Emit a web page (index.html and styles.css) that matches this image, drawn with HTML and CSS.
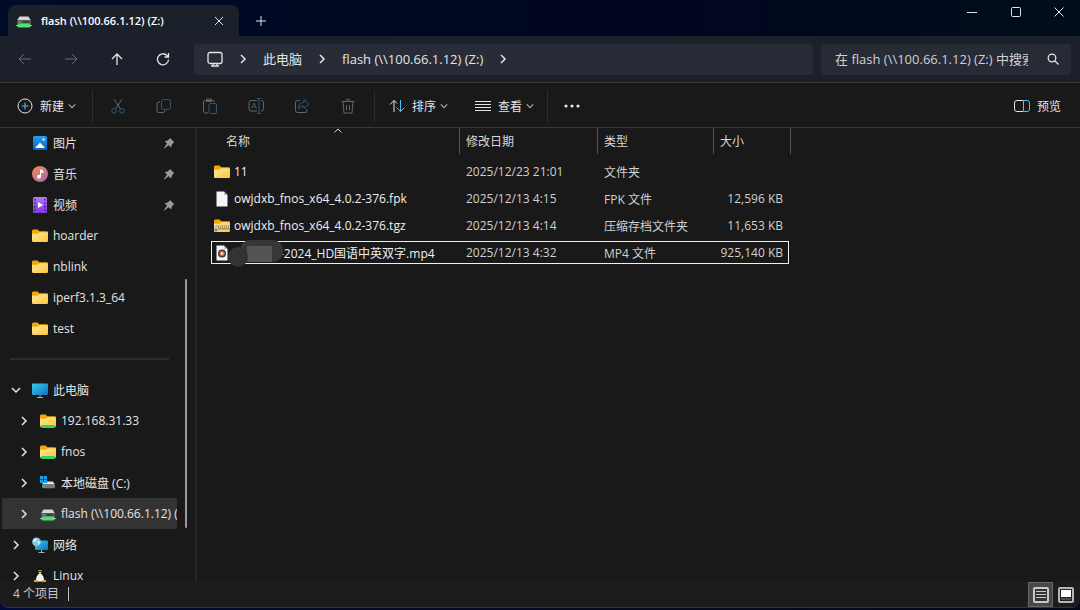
FILE: index.html
```html
<!DOCTYPE html>
<html lang="zh-CN">
  <head>
    <meta charset="UTF-8" />
    <meta name="viewport" content="width=device-width, initial-scale=1.0" />
    <title>flash (\\100.66.1.12) (Z:)</title>
    <link rel="stylesheet" href="styles.css">
  </head>
  <body>
    <!-- Shared icons -->
    <svg class="sprite" aria-hidden="true">
      <defs>
        <linearGradient id="gFolder" x1="0" y1="0" x2="1" y2="1">
          <stop offset="0" stop-color="#ffe9a0" />
          <stop offset="1" stop-color="#fcc637" />
        </linearGradient>
        <linearGradient id="gScreen" x1="0" y1="0" x2="1" y2="1">
          <stop offset="0" stop-color="#35d0e4" />
          <stop offset="1" stop-color="#0f6fc5" />
        </linearGradient>
        <linearGradient id="gPhoto" x1="0" y1="0" x2="0" y2="1">
          <stop offset="0" stop-color="#23a0ee" />
          <stop offset="1" stop-color="#0c63bd" />
        </linearGradient>
        <linearGradient id="gMusic" x1="0" y1="0" x2="1" y2="1">
          <stop offset="0" stop-color="#f38e50" />
          <stop offset="1" stop-color="#a866a8" />
        </linearGradient>
        <linearGradient id="gVideo" x1="0" y1="0" x2="0" y2="1">
          <stop offset="0" stop-color="#b279f4" />
          <stop offset="1" stop-color="#823be0" />
        </linearGradient>
      </defs>
      <symbol id="folder" viewBox="0 0 16 16">
        <path d="M0 3Q0 1.500 1.200 1.500H5.600L7.200 3.200H14.800Q16 3.200 16 4.400V9H0Z" fill="#f5a900" />
        <path d="M0 5.800H5.400L7.400 4.200H14.900Q16 4.200 16 5.400V12.800Q16 14 14.800 14H1.200Q0 14 0 12.800Z" fill="url(#gFolder)" />
      </symbol>
      <symbol id="netfolder" viewBox="0 0 16 16">
        <use href="#folder" width="16" height="16" />
        <rect x="1" y="12" width="14" height="3" rx="1" fill="#35d55c" />
      </symbol>
      <symbol id="netdrive" viewBox="0 0 16 16">
        <path d="M3.600 3.400H12.400L15 7.400H1Z" fill="#d5d7d7" />
        <rect x="1" y="7" width="14" height="4" rx="1" fill="#555b59" />
        <rect x="3" y="8.400" width="2" height="1" fill="#4be36f" />
        <rect x="7" y="8.400" width="6" height="1" fill="#262a28" />
        <rect x="1.600" y="10.600" width="12.800" height="3.800" rx="1.200" fill="#4be36f" />
        <path d="M0 12.500H3M13 12.500H16" stroke="#aeb4b1" />
      </symbol>
      <symbol id="cdrive" viewBox="0 0 16 16">
        <path d="M4 6.400H12.800L15 9.600H2Z" fill="#e2e3e3" />
        <rect x="2" y="9.200" width="13" height="4" rx="1" fill="#787b7c" />
        <rect x="3.600" y="10.800" width="1.600" height="1" fill="#4be36f" />
        <path d="M0 1H3.200V4.200H0ZM3.800 1H7V4.200H3.800ZM0 4.800H3.200V8H0ZM3.800 4.800H7V8H3.800Z" fill="#1aa0ea" />
      </symbol>
      <symbol id="monitor" viewBox="0 0 16 16">
        <rect x="0" y="1.500" width="16" height="11.500" rx="1" fill="url(#gScreen)" />
        <path d="M8 13V15M5 15.500H11" stroke="#a6afb4" />
      </symbol>
      <symbol id="network" viewBox="0 0 16 16">
        <rect x="3" y="3.500" width="13" height="9.500" rx="1" fill="url(#gScreen)" />
        <path d="M9.500 13V15M6.500 15.500H12.500" stroke="#a6afb4" />
        <circle cx="4.500" cy="4.800" r="4.400" fill="#83c4e4" />
        <path d="M1 3Q3 .6 5 2L4 4.400L2 5ZM5.500 4L8.200 5L6.400 8.200Z" fill="#d8f0f6" />
      </symbol>
      <symbol id="penguin" viewBox="0 0 16 16">
        <path d="M8 1Q11 1 11 5Q14 9 13.600 14H2.400Q2 9 5 5Q5 1 8 1Z" fill="#101010" />
        <path d="M8 4.500Q12.500 8 12 13.500H4Q3.500 8 8 4.500Z" fill="#f2f2f2" />
        <path d="M6.200 4H9.800L8 6.200Z" fill="#f2b01e" />
        <circle cx="7" cy="2.800" r=".7" fill="#fff" />
        <circle cx="9" cy="2.800" r=".7" fill="#fff" />
        <path d="M2 12.500Q4 10 6.800 14Q4 16 1.600 15ZM14 12.500Q12 10 9.200 14Q12 16 14.400 15Z" fill="#e0a21b" />
      </symbol>
      <symbol id="photo" viewBox="0 0 16 16">
        <rect x="1" y="1" width="14" height="14" rx="1.500" fill="url(#gPhoto)" />
        <path d="M3 13L8 7.500L13 13Z" fill="#fff" />
        <circle cx="11.500" cy="4.500" r="1.300" fill="#cde9fb" />
      </symbol>
      <symbol id="music" viewBox="0 0 16 16">
        <circle cx="8" cy="8" r="8" fill="url(#gMusic)" />
        <path d="M8.500 10.500V3.800L11 5V6.600L8.500 6" fill="#fff" stroke="#fff" />
        <circle cx="7" cy="10.800" r="2" fill="#fff" />
      </symbol>
      <symbol id="video" viewBox="0 0 16 16">
        <rect x="1" y="0" width="14" height="16" rx="1.500" fill="url(#gVideo)" />
        <path d="M3 2V14M13 2V14" stroke="#42207c" stroke-width="1.600" stroke-dasharray="1.600 1.800" />
        <path d="M6 5V11L11 8Z" fill="#fff" />
      </symbol>
      <symbol id="pin" viewBox="0 0 12 12">
        <path d="M7 1L11.300 5.300L10 6L8.600 8.200L8.200 10.600L5.600 8.200L1.400 11.400L1 11L4 6.600L1.600 4.200L4 3.700L6.200 2.300Z" fill="#929ba1" />
      </symbol>
      <symbol id="right" viewBox="0 0 10 10">
        <path d="M3 1L7 5L3 9" fill="none" stroke="currentColor" stroke-width="1.500" />
      </symbol>
      <symbol id="down" viewBox="0 0 10 10">
        <path d="M1 3L5 7L9 3" fill="none" stroke="currentColor" stroke-width="1.500" />
      </symbol>
      <symbol id="file" viewBox="0 0 16 16">
        <path d="M2.500 .5H10L13.500 4V15.500H2.500Z" fill="#f5f5f5" />
        <path d="M10 .5V4H13.500Z" fill="#b9b9b9" />
      </symbol>
      <symbol id="zip" viewBox="0 0 16 16">
        <use href="#folder" width="16" height="16" />
        <path d="M1 9.500H16" stroke="#a5946a" stroke-width="4" />
        <path d="M1 9H16" stroke="#d9d3c0" stroke-width="2" stroke-dasharray="1 1" />
        <rect x="0" y="8" width="4" height="6" rx="1" fill="#c4c2b8" />
        <rect x="1" y="11" width="2" height="2" fill="#77756c" />
      </symbol>
      <symbol id="media" viewBox="0 0 16 16">
        <use href="#file" width="16" height="16" />
        <circle cx="8" cy="8.500" r="4" fill="#3d3a4c" />
        <circle cx="8" cy="8.500" r="2.600" fill="#d9794f" />
        <path d="M7 7V10L9.600 8.500Z" fill="#fff" />
      </symbol>
    </svg>

    <div class="window">
      <header class="titlebar">
        <div class="tab">
          <svg class="icon"><use href="#netdrive" /></svg>
          <span class="tab-title">flash (\\100.66.1.12) (Z:)</span>
          <button class="tab-close" aria-label="关闭标签页">
            <svg width="10" height="10" class="line"><path d="M1 1L9 9M9 1L1 9" /></svg>
          </button>
        </div>
        <button class="tab-add" aria-label="新标签页">
          <svg width="10" height="10" class="line"><path d="M5 0V10M0 5H10" /></svg>
        </button>
        <div class="caption">
          <button aria-label="最小化"><svg width="10" height="10" class="line"><path d="M0 5.500H10" /></svg></button>
          <button aria-label="最大化"><svg width="10" height="10" class="line"><rect x=".5" y=".5" width="9" height="9" rx="1" /></svg></button>
          <button aria-label="关闭"><svg width="10" height="10" class="line"><path d="M.5 .5L9.500 9.500M9.500 .5L.5 9.500" /></svg></button>
        </div>
      </header>

      <div class="navbar">
        <div class="nav-buttons">
          <button class="dim" aria-label="后退"><svg width="14" height="14" class="line"><path d="M13 7H1M6 2L1 7L6 12" /></svg></button>
          <button class="dim" aria-label="前进"><svg width="14" height="14" class="line"><path d="M1 7H13M8 2L13 7L8 12" /></svg></button>
          <button aria-label="向上"><svg width="14" height="14" class="line bold"><path d="M7 13V2M2 7L7 2L12 7" /></svg></button>
          <button aria-label="刷新"><svg width="14" height="14" class="line bold"><path d="M12.500 7.500A5.500 5.500 0 1 1 11 3.500L12.500 5M12.500 1V5H8.500" /></svg></button>
        </div>
        <nav class="address" aria-label="地址">
          <svg width="16" height="16" class="line bold pc"><rect x="1" y="1.500" width="14" height="11" rx="2" /><path d="M6 12.500V15M10 12.500V15M4 15H12" /></svg>
          <svg class="chev"><use href="#right" /></svg>
          <a href="#">此电脑</a>
          <svg class="chev"><use href="#right" /></svg>
          <a href="#">flash (\\100.66.1.12) (Z:)</a>
          <svg class="chev"><use href="#right" /></svg>
        </nav>
        <div class="search">
          <input type="text" aria-label="搜索" placeholder="在 flash (\\100.66.1.12) (Z:) 中搜索" />
          <button aria-label="开始搜索"><svg width="12" height="12" class="line bold"><circle cx="5" cy="5" r="3.800" /><path d="M8 8L11.500 11.500" /></svg></button>
        </div>
      </div>

      <div class="toolbar">
        <button class="cmd cmd-new">
          <svg width="16" height="16" class="line"><circle cx="8" cy="8" r="7" /><path class="blue" d="M8 4.500V11.500M4.500 8H11.500" /></svg>
          新建
          <svg class="drop"><use href="#down" /></svg>
        </button>
        <div class="sep"></div>
        <div class="tools">
          <button aria-label="剪切"><svg width="16" height="16" class="line"><path d="M4 1L10.500 11M12 1L5.500 11" /><g class="blue"><circle cx="4" cy="12.800" r="2.300" /><circle cx="12" cy="12.800" r="2.300" /></g></svg></button>
          <button aria-label="复制"><svg width="16" height="16" class="line"><path d="M4 4H3Q1 4 1 6V12.500Q1 14.500 3 14.500H7Q9 14.500 9 12.500" /><rect class="blue" x="5.500" y="1.500" width="9" height="10" rx="2" /></svg></button>
          <button aria-label="粘贴"><svg width="16" height="16" class="line"><path d="M6 15H3.500Q1.500 15 1.500 13V4Q1.500 2.500 3.500 2.500H10.500Q12.500 2.500 12.500 4M4.500 3.500V1H9.500V3.500Z" /><rect class="blue" x="7" y="5.500" width="7.500" height="10" rx="1.500" /></svg></button>
          <button aria-label="重命名"><svg width="16" height="16" class="line"><path d="M9 2.500H3Q1 2.500 1 4.500V11Q1 13 3 13H9M13 2.500Q15.500 2.500 15.500 5V10.500Q15.500 13 13 13" /><path class="blue" d="M3.500 10.500L6 5L8.500 10.500M4.300 9H7.700M11 .5V15.500M9 .5H13M9 15.500H13" /></svg></button>
          <button aria-label="共享"><svg width="16" height="16" class="line"><path d="M6 2.500H3.500Q1.500 2.500 1.500 4.500V12.500Q1.500 14.500 3.500 14.500H11Q13 14.500 13 12.500V11" /><path class="blue" d="M10 1.500L15 6L10 10.500V8Q6.500 7.500 4.500 11Q4.500 4.500 10 4Z" /></svg></button>
          <button aria-label="删除"><svg width="16" height="16" class="line"><path d="M1.500 3.500H14.500M6 3.500Q6 1 8 1Q10 1 10 3.500M3 3.500L4 15H12L13 3.500M6.500 7V12M9.500 7V12" /></svg></button>
        </div>
        <div class="sep"></div>
        <button class="cmd">
          <svg width="16" height="16" class="line"><path d="M5 14V2.500M1 6.500L5 2.500L8 5.500" /><path class="blue" d="M11.500 2V13.500M7.500 9.500L11.500 13.500L15.500 9.500" /></svg>
          排序
          <svg class="drop"><use href="#down" /></svg>
        </button>
        <button class="cmd">
          <svg width="16" height="16" class="line"><path d="M0 3.500H16M0 6.500H16M0 9.500H16M0 12.500H16" /></svg>
          查看
          <svg class="drop"><use href="#down" /></svg>
        </button>
        <div class="sep"></div>
        <button class="more" aria-label="更多"><svg width="16" height="4" fill="#e8e8e8"><circle cx="2" cy="2" r="1.600" /><circle cx="8" cy="2" r="1.600" /><circle cx="14" cy="2" r="1.600" /></svg></button>
        <button class="cmd cmd-preview">
          <svg width="16" height="16" class="line"><path d="M9 2.500H3Q.5 2.500 .5 5V11Q.5 13.500 3 13.500H9" /><path class="blue" d="M9.500 2.500H13Q15.500 2.500 15.500 5V11Q15.500 13.500 13 13.500H9.500Z" /></svg>
          预览
        </button>
      </div>

      <main class="content">
        <aside class="sidebar">
          <nav class="tree" aria-label="导航窗格">
            <a href="#" class="item"><svg class="icon"><use href="#photo" /></svg><span>图片</span><svg class="pin"><use href="#pin" /></svg></a>
            <a href="#" class="item"><svg class="icon"><use href="#music" /></svg><span>音乐</span><svg class="pin"><use href="#pin" /></svg></a>
            <a href="#" class="item"><svg class="icon"><use href="#video" /></svg><span>视频</span><svg class="pin"><use href="#pin" /></svg></a>
            <a href="#" class="item"><svg class="icon"><use href="#folder" /></svg><span>hoarder</span></a>
            <a href="#" class="item"><svg class="icon"><use href="#folder" /></svg><span>nblink</span></a>
            <a href="#" class="item"><svg class="icon"><use href="#folder" /></svg><span>iperf3.1.3_64</span></a>
            <a href="#" class="item"><svg class="icon"><use href="#folder" /></svg><span>test</span></a>
            <hr class="divider" />
            <a href="#" class="item node"><svg class="chev"><use href="#down" /></svg><svg class="icon"><use href="#monitor" /></svg><span>此电脑</span></a>
            <a href="#" class="item node child"><svg class="chev"><use href="#right" /></svg><svg class="icon"><use href="#netfolder" /></svg><span>192.168.31.33</span></a>
            <a href="#" class="item node child"><svg class="chev"><use href="#right" /></svg><svg class="icon"><use href="#netfolder" /></svg><span>fnos</span></a>
            <a href="#" class="item node child"><svg class="chev"><use href="#right" /></svg><svg class="icon"><use href="#cdrive" /></svg><span>本地磁盘 (C:)</span></a>
            <a href="#" class="item node child active"><svg class="chev"><use href="#right" /></svg><svg class="icon"><use href="#netdrive" /></svg><span>flash (\\100.66.1.12) (Z:)</span></a>
            <a href="#" class="item node"><svg class="chev"><use href="#right" /></svg><svg class="icon"><use href="#network" /></svg><span>网络</span></a>
            <a href="#" class="item node"><svg class="chev"><use href="#right" /></svg><svg class="icon"><use href="#penguin" /></svg><span>Linux</span></a>
          </nav>
          <div class="scrollbar"><div class="thumb"></div></div>
        </aside>

        <section class="files">
          <table>
            <thead>
              <tr>
                <th class="col-name">名称<svg class="sort-mark line" width="8" height="5"><path d="M.5 4.500L4 1L7.500 4.500" /></svg></th>
                <th class="col-date">修改日期</th>
                <th class="col-type">类型</th>
                <th class="col-size">大小</th>
              </tr>
            </thead>
            <tbody>
              <tr>
                <td><div class="name"><svg class="icon"><use href="#folder" /></svg>11</div></td>
                <td>2025/12/23 21:01</td>
                <td>文件夹</td>
                <td class="size"></td>
              </tr>
              <tr>
                <td><div class="name"><svg class="icon"><use href="#file" /></svg>owjdxb_fnos_x64_4.0.2-376.fpk</div></td>
                <td>2025/12/13 4:15</td>
                <td>FPK 文件</td>
                <td class="size">12,596 KB</td>
              </tr>
              <tr>
                <td><div class="name"><svg class="icon"><use href="#zip" /></svg>owjdxb_fnos_x64_4.0.2-376.tgz</div></td>
                <td>2025/12/13 4:14</td>
                <td>压缩存档文件夹</td>
                <td class="size">11,653 KB</td>
              </tr>
              <tr class="focused">
                <td>
                  <div class="name masked">
                    <svg class="icon"><use href="#media" /></svg>-2024_HD国语中英双字.mp4
                    <svg class="mask" width="56" height="30"><rect x="12" y="1" width="43" height="22" rx="10" fill="#373737" /><rect x="19" y="7" width="25" height="16" fill="#555453" /><circle cx="10" cy="18" r="10" fill="#333" /></svg>
                  </div>
                </td>
                <td>2025/12/13 4:32</td>
                <td>MP4 文件</td>
                <td class="size">925,140 KB</td>
              </tr>
            </tbody>
          </table>
        </section>
      </main>

      <footer class="statusbar">
        <span class="count">4 个项目</span>
        <div class="view-switch">
          <button class="on" aria-label="详细信息"><svg width="16" height="16"><rect x="1" y="1" width="14" height="14" rx="1" fill="#333" stroke="#c9c9c9" stroke-width="2" /><path d="M3 4.500H13M3 7.500H13M3 10.500H13" stroke="#c9c9c9" stroke-width="1" /></svg></button>
          <button aria-label="大缩略图"><svg width="16" height="16"><rect x="1" y="1" width="14" height="14" rx="1" fill="#222" stroke="#b5b5b5" stroke-width="2" /><rect x="3" y="3" width="10" height="7" fill="#fff" /><path d="M3 12H13" stroke="#777" /></svg></button>
        </div>
      </footer>
    </div>
  </body>
</html>
```

FILE: styles.css
```css
* {
  margin: 0;
  padding: 0;
  box-sizing: border-box;
}

body {
  height: 100vh;
  padding-bottom: 2px;
  background: linear-gradient(90deg, #020a3c, #030a22 30%, #05091c);
  font-family: "Open Sans", "Noto Sans CJK SC", sans-serif;
  font-size: 12px;
  color: #e4e4e4;
  overflow: hidden;
}

button {
  display: flex;
  align-items: center;
  justify-content: center;
  background: none;
  border: none;
  font: inherit;
  color: inherit;
}

a {
  color: inherit;
  text-decoration: none;
}

svg {
  flex: none;
}

.sprite {
  position: absolute;
  width: 0;
  height: 0;
}

.icon {
  width: 16px;
  height: 16px;
}

.chev {
  width: 10px;
  height: 10px;
}

.line {
  fill: none;
  stroke: currentColor;
  stroke-width: 1;
}

.line.bold {
  stroke-width: 1.3;
}

.blue {
  stroke: #4cc2ff;
}

.window {
  display: flex;
  flex-direction: column;
  height: 100%;
  background: #191919;
  border-bottom: 1px solid #333438;
  border-radius: 0 0 8px 8px;
  overflow: hidden;
}

/* Title bar */
.titlebar {
  display: flex;
  height: 36px;
  padding-left: 8px;
  background: linear-gradient(90deg, #000b26, #00061f 60%, #020d1b);
}

.tab {
  display: flex;
  align-items: center;
  width: 231px;
  margin-top: 5px;
  padding: 0 8px;
  background: #1b212b;
  border-radius: 8px 8px 0 0;
}

.tab-title {
  flex: 1;
  margin-left: 9px;
  font-size: 11px;
  font-weight: 600;
  color: #fff;
  white-space: nowrap;
}

.tab-close {
  width: 25px;
  height: 24px;
}

.tab-add {
  width: 43px;
  height: 41px;
}

.caption {
  display: flex;
  margin-left: auto;
}

.caption button {
  width: 44px;
  height: 24px;
}

.caption button:last-child {
  width: 42px;
}

/* Navigation row */
.navbar {
  display: flex;
  align-items: center;
  gap: 8px;
  height: 47px;
  padding-right: 9px;
  background: #1b202b;
  border-bottom: 1px solid #3b3b3b;
  font-size: 13px;
}

.nav-buttons {
  display: flex;
  padding-left: 2px;
}

.nav-buttons button {
  width: 46px;
  height: 32px;
}

.nav-buttons .dim {
  color: #666b74;
}

.address {
  display: flex;
  flex: 1;
  align-items: center;
  gap: 15px;
  height: 31px;
  padding-bottom: 1px;
  padding-left: 13px;
  background: #272c37;
  border-radius: 4px;
  white-space: nowrap;
}

.search {
  display: flex;
  align-items: center;
  width: 250px;
  height: 31px;
  padding-left: 14px;
  background: #272b36;
  border-radius: 4px;
}

.search input {
  flex: 1;
  min-width: 0;
  background: none;
  border: none;
  outline: none;
  font: inherit;
  color: #d0d0d0;
}

.search input::placeholder {
  color: #d0d0d0;
}

.search button {
  width: 36px;
  height: 31px;
  margin-left: 7px;
}

/* Command bar */
.toolbar {
  display: flex;
  align-items: center;
  height: 45px;
  padding-top: 2px;
  border-bottom: 1px solid #363636;
}

.cmd {
  gap: 7px;
  height: 32px;
  padding: 0 13px 0 14px;
  white-space: nowrap;
}

.cmd-new {
  padding: 0 16px 0 17px;
}

.cmd-preview {
  margin-left: auto;
  padding-right: 19px;
}

.drop {
  width: 8px;
  height: 8px;
  margin-left: -3px;
  color: #a8a8a8;
}

.sep {
  width: 1px;
  height: 32px;
  background: #2c2c2c;
}

.tools {
  display: flex;
  padding: 0 3px 0 2px;
}

.tools button {
  width: 46px;
  height: 32px;
  opacity: 0.38;
}

.more {
  width: 48px;
  height: 32px;
}

/* Main area */
.content {
  display: flex;
  flex: 1;
  min-height: 0;
}

.sidebar {
  display: flex;
  width: 197px;
  padding-left: 2px;
  border-right: 2px solid #242424;
  overflow: hidden;
}

.tree {
  width: 175px;
  margin-top: -1px;
  overflow: hidden;
}

.item {
  display: flex;
  align-items: center;
  gap: 5px;
  height: 31px;
  padding-left: 30px;
  white-space: nowrap;
  overflow: hidden;
}

.node {
  padding-left: 9px;
}

.node .icon {
  margin-left: 6px;
}

.child {
  padding-left: 17px;
}

.active {
  background: #333;
}

.pin {
  width: 12px;
  height: 12px;
  margin-left: auto;
  margin-right: 2px;
}

.divider {
  height: 2px;
  margin: 14px 8px;
  background: #2d2d2d;
  border: none;
}

.scrollbar {
  flex: 1;
  padding: 151px 0 54px 8px;
}

.thumb {
  width: 2px;
  height: 100%;
  background: #9a9a9a;
  border-radius: 1px;
}

/* File list */
.files {
  flex: 1;
  padding-left: 12px;
}

table {
  width: 582px;
  table-layout: fixed;
  border-collapse: separate;
  border-spacing: 0;
}

th {
  position: relative;
  height: 26px;
  padding-left: 6px;
  border-right: 1px solid #555;
  font-weight: normal;
  text-align: left;
  color: #d8d8d8;
}

.col-name {
  width: 251px;
  padding-left: 17px;
}

.col-date {
  width: 138px;
}

.col-type {
  width: 116px;
}

.col-size {
  width: 77px;
}

.sort-mark {
  position: absolute;
  top: 0;
  left: 50%;
}

thead::after {
  content: "";
  display: block;
  height: 4px;
}

td {
  height: 27px;
  padding-left: 6px;
  color: #d0d0d0;
  white-space: nowrap;
}

td:first-child {
  padding-left: 5px;
}

.name {
  position: relative;
  display: flex;
  align-items: center;
  gap: 4px;
  color: #f0f0f0;
}

.masked {
  gap: 50px;
}

.mask {
  position: absolute;
  top: -5px;
  left: 14px;
}

td.size {
  padding-right: 8px;
  text-align: right;
}

.focused {
  outline: 1px solid #f0f0f0;
  outline-offset: -3px;
  border-radius: 2px;
}

/* Status bar */
.statusbar {
  display: flex;
  justify-content: space-between;
  height: 25px;
  background: #1c1c1c;
}

.count {
  height: 14px;
  margin-top: 5px;
  margin-left: 13px;
  padding-right: 9px;
  border-right: 1px solid #c0c0c0;
  line-height: 14px;
  color: #c8c8c8;
}

.view-switch {
  display: flex;
  padding-right: 2px;
}

.view-switch button {
  width: 25px;
  height: 25px;
}

.view-switch .on {
  background: #484848;
  border: 1px solid #666;
}
```
